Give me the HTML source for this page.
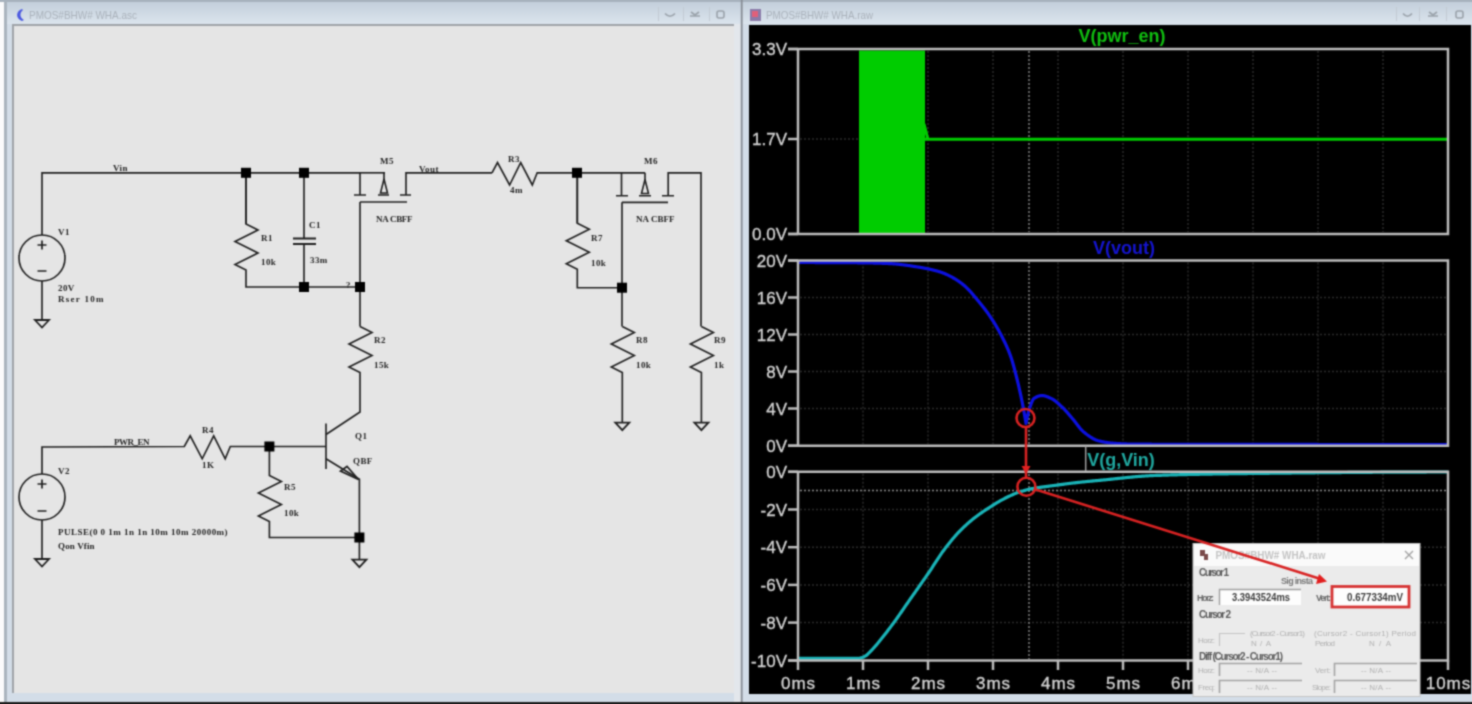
<!DOCTYPE html>
<html><head><meta charset="utf-8"><style>html,body{margin:0;padding:0;background:#f6f7f8;overflow:hidden}svg{display:block}#w{}</style></head>
<body><div id="w"><svg width="1472" height="704" viewBox="0 0 1472 704"><defs><filter id="bl" x="0" y="0" width="1472" height="704" filterUnits="userSpaceOnUse" color-interpolation-filters="sRGB"><feConvolveMatrix order="5" kernelMatrix="0.00009 0.00198 0.00548 0.00198 0.00009 0.00198 0.04220 0.11707 0.04220 0.00198 0.00548 0.11707 0.32480 0.11707 0.00548 0.00198 0.04220 0.11707 0.04220 0.00198 0.00009 0.00198 0.00548 0.00198 0.00009" edgeMode="duplicate"/></filter></defs><g filter="url(#bl)">
<rect x="0" y="0" width="1472" height="704" fill="#fbfbfc"/>
<!-- left window frame -->
<rect x="4" y="0" width="737" height="704" fill="#d3dde8"/><rect x="734" y="0" width="7" height="704" fill="#e3e7ec"/>
<rect x="4" y="0" width="3" height="704" fill="#aab4be"/>
<!-- right window frame -->
<rect x="742" y="0" width="730" height="704" fill="#d3dde8"/>
<linearGradient id="tb" x1="0" y1="0" x2="0" y2="1"><stop offset="0" stop-color="#c3cfdb"/><stop offset="1" stop-color="#dbe4ed"/></linearGradient>
<rect x="7" y="2" width="734" height="22" fill="url(#tb)"/>
<rect x="742" y="2" width="730" height="22" fill="url(#tb)"/>
<rect x="0" y="0" width="1472" height="2" fill="#a7b2bd"/>
<rect x="740.8" y="0" width="1.8" height="704" fill="#868c94"/>
<rect x="0" y="702" width="1472" height="2" fill="#1e1e1e"/>
<!-- left content -->
<rect x="12" y="24" width="722" height="669" fill="#9fa3a8"/>
<rect x="14" y="26" width="720" height="667" fill="#e5e5e5"/>
<!-- right content -->
<rect x="749" y="25" width="722" height="669" fill="#000"/>
<path d="M22,9 C16,11 15,18 22,21 L24,20 C20,18 19,13 23,10 Z" fill="#4a58e0"/><text x="29" y="19" font-family="Liberation Sans" font-size="10.5" fill="#aab2bb" textLength="108" lengthAdjust="spacingAndGlyphs">PMOS#BHW# WHA.asc</text><rect x="750" y="9" width="11" height="12" fill="#8a7aa8"/><rect x="752" y="11" width="6" height="6" fill="#e0607a"/><text x="766" y="19" font-family="Liberation Sans" font-size="10.5" fill="#aab2bb" textLength="107" lengthAdjust="spacingAndGlyphs">PMOS#BHW# WHA.raw</text><g stroke="#c2cad3" stroke-width="1"><path d="M658.5,7 V21"/><path d="M683.5,7 V21"/><path d="M709.5,7 V21"/><path d="M1396.5,7 V21"/><path d="M1419.5,7 V21"/><path d="M1446.5,7 V21"/></g><g stroke="#9aa2aa" stroke-width="1.6" fill="none"><path d="M665,13.5 Q670,19 675,13.5"/><path d="M691,12 l4,3 l4,-3 M690,16 h10"/><rect x="717" y="11" width="7" height="7" rx="2"/><path d="M1403,13.5 Q1407.5,19 1412,13.5"/><path d="M1429,12 l4,3 l4,-3 M1428,16 h10"/><rect x="1456" y="11" width="7" height="7" rx="2"/></g><g stroke="#202020" stroke-width="1.65" fill="none" stroke-linejoin="miter"><polyline points="42.0,281.0 42.0,320.0"/><polyline points="42.0,235.0 42.0,172.8 360.0,172.8"/><circle cx="42" cy="258" r="23" fill="none"/><path d="M37.5,245 h9 M42,240.5 v9 M37.5,271 h9" stroke-width="1.7"/><polygon points="35.0,320.0 49.0,320.0 42.0,327.5" fill="none" stroke-width="1.8"/><polyline points="246.0,172.8 246.0,224.0 258.0,230.0 235.0,241.5 258.0,253.0 235.0,264.5 246.0,270.0 246.0,287.0 360.0,287.0"/><polyline points="246.0,172.8 246.0,224.0"/><polyline points="304.0,172.8 304.0,238.0"/><polyline points="304.0,244.0 304.0,287.0"/><path d="M293,238.5 h23 M293,244 h23" stroke-width="2"/><polyline points="360.0,172.8 385.0,172.8"/><polyline points="360.0,172.8 360.0,195.0"/><path d="M354,195 h12 M378,195 h11 M400,195 h11"/><polyline points="384.0,172.8 384.0,180.0"/><polygon points="380.5,193 384,179 387.5,193" fill="none" stroke-width="1.6"/><polyline points="406.0,195.0 406.0,172.8 492.0,172.8"/><polyline points="360.0,202.0 407.0,202.0"/><polyline points="360.0,202.0 360.0,326.6"/><polyline points="360.0,326.6 372.0,332.6 349.0,344.1 372.0,355.6 349.0,367.1 360.0,372.6 360.0,412.0 326.0,434.5"/><polyline points="326.0,423.5 326.0,469.0"/><polyline points="326.0,458.8 359.4,479.2 359.4,537.5"/><polygon points="358.5,479.5 340.5,471 347,466.5" fill="none" stroke-width="1.7"/><polyline points="492.0,172.8 497.5,162.6 509.6,185.0 520.7,162.6 532.3,185.0 537.2,172.8 645.0,172.8"/><polyline points="577.3,172.8 577.3,223.2 589.3,229.2 566.3,240.7 589.3,252.2 566.3,263.7 577.3,269.2 577.3,287.7 622.4,287.7"/><polyline points="577.3,172.8 577.3,223.2"/><polyline points="621.5,172.8 621.5,195.7"/><path d="M616,195.7 h12 M639,195.7 h12 M662,195.7 h12"/><polyline points="645.0,172.8 645.0,180.0"/><polygon points="641.5,193.5 645,179.5 648.5,193.5" fill="none" stroke-width="1.6"/><polyline points="668.2,195.7 668.2,172.8 701.0,172.8 701.0,326.6"/><polyline points="622.0,202.3 668.0,202.3"/><polyline points="622.0,202.3 622.0,326.6"/><polyline points="622.3,326.6 634.3,332.6 611.3,344.1 634.3,355.6 611.3,367.1 622.3,372.6 622.3,422.7"/><polygon points="615.3,422.7 629.3,422.7 622.3,430.2" fill="none" stroke-width="1.8"/><polyline points="701.4,326.6 713.4,332.6 690.4,344.1 713.4,355.6 690.4,367.1 701.4,372.6 701.4,422.7"/><polygon points="694.4,422.7 708.4,422.7 701.4,430.2" fill="none" stroke-width="1.8"/><polyline points="42.0,474.0 42.0,447.0 184.3,446.5 190.2,435.8 202.2,458.8 213.7,435.8 225.2,458.8 230.3,446.5 326.0,446.5"/><circle cx="42" cy="497" r="23" fill="none"/><path d="M37.5,484 h9 M42,479.5 v9 M37.5,511 h9" stroke-width="1.7"/><polyline points="42.0,520.0 42.0,559.0"/><polygon points="35.0,559.0 49.0,559.0 42.0,566.5" fill="none" stroke-width="1.8"/><polyline points="269.4,446.5 269.4,475.4 281.4,481.4 258.4,492.9 281.4,504.4 258.4,515.9 269.4,521.4 269.4,537.5 359.4,537.5"/><polyline points="359.4,537.5 359.4,559.7"/><polygon points="352.4,559.7 366.4,559.7 359.4,567.2" fill="none" stroke-width="1.8"/></g><rect x="241" y="167.8" width="10" height="10" fill="#000"/><rect x="299" y="167.8" width="10" height="10" fill="#000"/><rect x="299" y="282" width="10" height="10" fill="#000"/><rect x="355" y="282" width="10" height="10" fill="#000"/><rect x="572" y="167.8" width="10" height="10" fill="#000"/><rect x="617" y="282.7" width="10" height="10" fill="#000"/><rect x="264.4" y="441.5" width="10" height="10" fill="#000"/><rect x="354.4" y="532.5" width="10" height="10" fill="#000"/><g font-family="Liberation Serif" font-size="9" font-weight="bold" fill="#262626" letter-spacing="0.4"><text x="58" y="235">V1</text><text x="58" y="291">20V</text><text x="58" y="302" textLength="46" lengthAdjust="spacing">Rser 10m</text><text x="113" y="171">Vin</text><text x="261" y="240.5">R1</text><text x="261" y="265">10k</text><text x="309" y="228">C1</text><text x="310" y="263">33m</text><text x="380" y="164">M5</text><text x="419" y="172">Vout</text><text x="376" y="222" textLength="37" lengthAdjust="spacing">NA CBFF</text><text x="346" y="288">?</text><text x="508" y="162">R3</text><text x="510" y="193">4m</text><text x="644" y="164">M6</text><text x="636" y="222" textLength="39" lengthAdjust="spacing">NA CBFF</text><text x="591" y="240.5">R7</text><text x="591" y="266">10k</text><text x="374" y="342.5">R2</text><text x="374" y="368">15k</text><text x="636" y="342.5">R8</text><text x="636" y="368">10k</text><text x="714" y="342.5">R9</text><text x="714" y="368">1k</text><text x="114" y="445" textLength="36" lengthAdjust="spacing">PWR_EN</text><text x="202" y="433">R4</text><text x="202" y="467.5">1K</text><text x="284" y="489.5">R5</text><text x="284" y="516">10k</text><text x="355" y="439">Q1</text><text x="353" y="464">QBF</text><text x="58" y="473.5">V2</text><text x="58" y="535" textLength="170" lengthAdjust="spacing">PULSE(0 0 1m 1n 1n 10m 10m 20000m)</text><text x="58" y="549" textLength="37" lengthAdjust="spacing">Qon Vfin</text></g><g stroke="#2a2a2a" stroke-width="1.5" stroke-dasharray="2,2" fill="none"><path d="M800,139 H1446"/><path d="M863,51 V232"/><path d="M928,51 V232"/><path d="M993,51 V232"/><path d="M1058,51 V232"/><path d="M1123,51 V232"/><path d="M1188,51 V232"/><path d="M1253,51 V232"/><path d="M1318,51 V232"/><path d="M1383,51 V232"/><path d="M800,297.5 H1446"/><path d="M800,334.5 H1446"/><path d="M800,371.5 H1446"/><path d="M800,408.5 H1446"/><path d="M863,262.5 V443.7"/><path d="M928,262.5 V443.7"/><path d="M993,262.5 V443.7"/><path d="M1058,262.5 V443.7"/><path d="M1123,262.5 V443.7"/><path d="M1188,262.5 V443.7"/><path d="M1253,262.5 V443.7"/><path d="M1318,262.5 V443.7"/><path d="M1383,262.5 V443.7"/><path d="M800,509.5 H1446"/><path d="M800,547.2 H1446"/><path d="M800,584.9 H1446"/><path d="M800,622.6 H1446"/><path d="M863,473.8 V658.5"/><path d="M928,473.8 V658.5"/><path d="M993,473.8 V658.5"/><path d="M1058,473.8 V658.5"/><path d="M1123,473.8 V658.5"/><path d="M1188,473.8 V658.5"/><path d="M1253,473.8 V658.5"/><path d="M1318,473.8 V658.5"/><path d="M1383,473.8 V658.5"/></g><g stroke="#8a8a8a" stroke-width="1.4" stroke-dasharray="2,2" fill="none"><path d="M1029,51 V232 M1029,262 V444 M1029,474 V659"/><path d="M800,490.5 H1446"/></g><rect x="859" y="50.5" width="66" height="182.5" fill="#00cc00"/><path d="M924,124 L927.5,137.5 L926,139.2 L1448,139.2" stroke="#00cc00" stroke-width="3" fill="none"/><path d="M798.0,262.50 L798.5,262.50 L799.0,262.50 L799.5,262.50 L800.0,262.50 L800.5,262.50 L801.0,262.50 L801.5,262.50 L802.0,262.50 L802.5,262.50 L803.0,262.50 L803.5,262.50 L804.0,262.50 L804.5,262.50 L805.0,262.50 L805.5,262.50 L806.0,262.51 L806.5,262.51 L807.0,262.51 L807.5,262.51 L808.0,262.51 L808.5,262.51 L809.0,262.51 L809.5,262.51 L810.0,262.51 L810.5,262.51 L811.0,262.51 L811.5,262.52 L812.0,262.52 L812.5,262.52 L813.0,262.52 L813.5,262.52 L814.0,262.52 L814.5,262.52 L815.0,262.53 L815.5,262.53 L816.0,262.53 L816.5,262.53 L817.0,262.53 L817.5,262.53 L818.0,262.53 L818.5,262.54 L819.0,262.54 L819.5,262.54 L820.0,262.54 L820.5,262.54 L821.0,262.55 L821.5,262.55 L822.0,262.55 L822.5,262.55 L823.0,262.55 L823.5,262.56 L824.0,262.56 L824.5,262.56 L825.0,262.56 L825.5,262.56 L826.0,262.57 L826.5,262.57 L827.0,262.57 L827.5,262.57 L828.0,262.58 L828.5,262.58 L829.0,262.58 L829.5,262.58 L830.0,262.59 L830.5,262.59 L831.0,262.59 L831.5,262.59 L832.0,262.60 L832.5,262.60 L833.0,262.60 L833.5,262.60 L834.0,262.61 L834.5,262.61 L835.0,262.61 L835.5,262.62 L836.0,262.62 L836.5,262.62 L837.0,262.63 L837.5,262.63 L838.0,262.63 L838.5,262.63 L839.0,262.64 L839.5,262.64 L840.0,262.64 L840.5,262.65 L841.0,262.65 L841.5,262.65 L842.0,262.66 L842.5,262.66 L843.0,262.66 L843.5,262.67 L844.0,262.67 L844.5,262.68 L845.0,262.68 L845.5,262.68 L846.0,262.69 L846.5,262.69 L847.0,262.69 L847.5,262.70 L848.0,262.70 L848.5,262.70 L849.0,262.71 L849.5,262.71 L850.0,262.72 L850.5,262.72 L851.0,262.72 L851.5,262.73 L852.0,262.73 L852.5,262.74 L853.0,262.74 L853.5,262.74 L854.0,262.75 L854.5,262.75 L855.0,262.76 L855.5,262.76 L856.0,262.77 L856.5,262.77 L857.0,262.77 L857.5,262.78 L858.0,262.78 L858.5,262.79 L859.0,262.79 L859.5,262.80 L860.0,262.80 L860.5,262.80 L861.0,262.81 L861.5,262.81 L862.0,262.82 L862.5,262.83 L863.0,262.83 L863.5,262.84 L864.0,262.85 L864.5,262.85 L865.0,262.86 L865.5,262.87 L866.0,262.88 L866.5,262.88 L867.0,262.89 L867.5,262.90 L868.0,262.91 L868.5,262.92 L869.0,262.93 L869.5,262.94 L870.0,262.95 L870.5,262.96 L871.0,262.97 L871.5,262.98 L872.0,263.00 L872.5,263.01 L873.0,263.02 L873.5,263.03 L874.0,263.04 L874.5,263.06 L875.0,263.07 L875.5,263.09 L876.0,263.10 L876.5,263.11 L877.0,263.13 L877.5,263.14 L878.0,263.16 L878.5,263.17 L879.0,263.19 L879.5,263.21 L880.0,263.22 L880.5,263.24 L881.0,263.26 L881.5,263.27 L882.0,263.29 L882.5,263.31 L883.0,263.33 L883.5,263.34 L884.0,263.36 L884.5,263.38 L885.0,263.40 L885.5,263.42 L886.0,263.44 L886.5,263.46 L887.0,263.48 L887.5,263.50 L888.0,263.52 L888.5,263.54 L889.0,263.57 L889.5,263.59 L890.0,263.61 L890.5,263.63 L891.0,263.66 L891.5,263.69 L892.0,263.72 L892.5,263.75 L893.0,263.78 L893.5,263.82 L894.0,263.85 L894.5,263.89 L895.0,263.93 L895.5,263.98 L896.0,264.02 L896.5,264.06 L897.0,264.11 L897.5,264.16 L898.0,264.21 L898.5,264.26 L899.0,264.31 L899.5,264.37 L900.0,264.42 L900.5,264.48 L901.0,264.54 L901.5,264.60 L902.0,264.66 L902.5,264.72 L903.0,264.78 L903.5,264.85 L904.0,264.91 L904.5,264.98 L905.0,265.05 L905.5,265.12 L906.0,265.18 L906.5,265.26 L907.0,265.33 L907.5,265.40 L908.0,265.47 L908.5,265.54 L909.0,265.62 L909.5,265.69 L910.0,265.77 L910.5,265.84 L911.0,265.92 L911.5,266.00 L912.0,266.08 L912.5,266.15 L913.0,266.23 L913.5,266.31 L914.0,266.39 L914.5,266.47 L915.0,266.55 L915.5,266.63 L916.0,266.71 L916.5,266.80 L917.0,266.88 L917.5,266.96 L918.0,267.04 L918.5,267.12 L919.0,267.20 L919.5,267.28 L920.0,267.37 L920.5,267.45 L921.0,267.53 L921.5,267.62 L922.0,267.70 L922.5,267.79 L923.0,267.88 L923.5,267.97 L924.0,268.06 L924.5,268.16 L925.0,268.25 L925.5,268.35 L926.0,268.44 L926.5,268.54 L927.0,268.64 L927.5,268.74 L928.0,268.85 L928.5,268.95 L929.0,269.06 L929.5,269.17 L930.0,269.28 L930.5,269.39 L931.0,269.50 L931.5,269.62 L932.0,269.74 L932.5,269.86 L933.0,269.98 L933.5,270.10 L934.0,270.23 L934.5,270.35 L935.0,270.48 L935.5,270.61 L936.0,270.75 L936.5,270.88 L937.0,271.02 L937.5,271.16 L938.0,271.31 L938.5,271.45 L939.0,271.60 L939.5,271.75 L940.0,271.90 L940.5,272.06 L941.0,272.22 L941.5,272.39 L942.0,272.57 L942.5,272.75 L943.0,272.94 L943.5,273.14 L944.0,273.34 L944.5,273.54 L945.0,273.76 L945.5,273.97 L946.0,274.20 L946.5,274.42 L947.0,274.65 L947.5,274.89 L948.0,275.13 L948.5,275.38 L949.0,275.62 L949.5,275.88 L950.0,276.13 L950.5,276.39 L951.0,276.65 L951.5,276.92 L952.0,277.18 L952.5,277.45 L953.0,277.73 L953.5,278.01 L954.0,278.30 L954.5,278.59 L955.0,278.89 L955.5,279.20 L956.0,279.51 L956.5,279.82 L957.0,280.15 L957.5,280.48 L958.0,280.82 L958.5,281.16 L959.0,281.51 L959.5,281.86 L960.0,282.22 L960.5,282.59 L961.0,282.96 L961.5,283.34 L962.0,283.73 L962.5,284.12 L963.0,284.52 L963.5,284.93 L964.0,285.34 L964.5,285.76 L965.0,286.19 L965.5,286.62 L966.0,287.08 L966.5,287.55 L967.0,288.03 L967.5,288.53 L968.0,289.04 L968.5,289.56 L969.0,290.09 L969.5,290.63 L970.0,291.18 L970.5,291.74 L971.0,292.31 L971.5,292.89 L972.0,293.47 L972.5,294.05 L973.0,294.64 L973.5,295.24 L974.0,295.84 L974.5,296.44 L975.0,297.04 L975.5,297.64 L976.0,298.24 L976.5,298.84 L977.0,299.44 L977.5,300.04 L978.0,300.64 L978.5,301.24 L979.0,301.84 L979.5,302.44 L980.0,303.05 L980.5,303.66 L981.0,304.27 L981.5,304.89 L982.0,305.51 L982.5,306.13 L983.0,306.76 L983.5,307.40 L984.0,308.04 L984.5,308.69 L985.0,309.34 L985.5,310.00 L986.0,310.67 L986.5,311.34 L987.0,312.02 L987.5,312.71 L988.0,313.41 L988.5,314.12 L989.0,314.84 L989.5,315.56 L990.0,316.29 L990.5,317.04 L991.0,317.79 L991.5,318.55 L992.0,319.32 L992.5,320.09 L993.0,320.88 L993.5,321.67 L994.0,322.47 L994.5,323.29 L995.0,324.11 L995.5,324.94 L996.0,325.78 L996.5,326.63 L997.0,327.49 L997.5,328.36 L998.0,329.25 L998.5,330.14 L999.0,331.04 L999.5,331.96 L1000.0,332.89 L1000.5,333.82 L1001.0,334.77 L1001.5,335.73 L1002.0,336.71 L1002.5,337.69 L1003.0,338.68 L1003.5,339.68 L1004.0,340.69 L1004.5,341.72 L1005.0,342.76 L1005.5,343.82 L1006.0,344.89 L1006.5,345.99 L1007.0,347.12 L1007.5,348.27 L1008.0,349.45 L1008.5,350.67 L1009.0,351.91 L1009.5,353.20 L1010.0,354.52 L1010.5,355.88 L1011.0,357.29 L1011.5,358.77 L1012.0,360.33 L1012.5,361.97 L1013.0,363.69 L1013.5,365.46 L1014.0,367.29 L1014.5,369.16 L1015.0,371.08 L1015.5,373.03 L1016.0,375.00 L1016.5,376.99 L1017.0,379.00 L1017.5,381.02 L1018.0,383.09 L1018.5,385.20 L1019.0,387.35 L1019.5,389.55 L1020.0,391.80 L1020.5,394.10 L1021.0,396.45 L1021.5,398.85 L1022.0,401.30 L1022.5,403.82 L1023.0,406.41 L1023.5,409.08 L1024.0,411.82 L1024.5,414.63 L1025.0,417.50 L1025.5,420.42 L1026.0,423.40 L1026.0,423.40 L1026.5,420.89 L1027.0,418.48 L1027.5,416.18 L1028.0,414.02 L1028.5,412.02 L1029.0,410.21 L1029.5,408.60 L1030.0,407.10 L1030.5,405.62 L1031.0,404.18 L1031.5,402.82 L1032.0,401.58 L1032.5,400.48 L1033.0,399.56 L1033.5,398.86 L1034.0,398.40 L1034.5,398.08 L1035.0,397.78 L1035.5,397.50 L1036.0,397.23 L1036.5,396.98 L1037.0,396.75 L1037.5,396.54 L1038.0,396.35 L1038.5,396.18 L1039.0,396.03 L1039.5,395.90 L1040.0,395.79 L1040.5,395.71 L1041.0,395.65 L1041.5,395.61 L1042.0,395.60 L1042.5,395.61 L1043.0,395.65 L1043.5,395.71 L1044.0,395.80 L1044.5,395.90 L1045.0,396.02 L1045.5,396.16 L1046.0,396.32 L1046.5,396.49 L1047.0,396.67 L1047.5,396.86 L1048.0,397.06 L1048.5,397.27 L1049.0,397.48 L1049.5,397.70 L1050.0,397.92 L1050.5,398.14 L1051.0,398.36 L1051.5,398.58 L1052.0,398.83 L1052.5,399.11 L1053.0,399.40 L1053.5,399.72 L1054.0,400.06 L1054.5,400.41 L1055.0,400.78 L1055.5,401.17 L1056.0,401.57 L1056.5,401.99 L1057.0,402.41 L1057.5,402.85 L1058.0,403.30 L1058.5,403.75 L1059.0,404.21 L1059.5,404.67 L1060.0,405.14 L1060.5,405.61 L1061.0,406.09 L1061.5,406.56 L1062.0,407.03 L1062.5,407.50 L1063.0,407.98 L1063.5,408.47 L1064.0,408.97 L1064.5,409.49 L1065.0,410.02 L1065.5,410.56 L1066.0,411.11 L1066.5,411.67 L1067.0,412.23 L1067.5,412.81 L1068.0,413.38 L1068.5,413.97 L1069.0,414.55 L1069.5,415.14 L1070.0,415.73 L1070.5,416.32 L1071.0,416.91 L1071.5,417.50 L1072.0,418.09 L1072.5,418.67 L1073.0,419.25 L1073.5,419.85 L1074.0,420.46 L1074.5,421.09 L1075.0,421.73 L1075.5,422.38 L1076.0,423.04 L1076.5,423.70 L1077.0,424.36 L1077.5,425.02 L1078.0,425.67 L1078.5,426.32 L1079.0,426.96 L1079.5,427.58 L1080.0,428.19 L1080.5,428.79 L1081.0,429.36 L1081.5,429.91 L1082.0,430.43 L1082.5,430.92 L1083.0,431.39 L1083.5,431.82 L1084.0,432.22 L1084.5,432.62 L1085.0,433.02 L1085.5,433.41 L1086.0,433.80 L1086.5,434.19 L1087.0,434.56 L1087.5,434.94 L1088.0,435.30 L1088.5,435.66 L1089.0,436.01 L1089.5,436.36 L1090.0,436.70 L1090.5,437.03 L1091.0,437.35 L1091.5,437.66 L1092.0,437.96 L1092.5,438.25 L1093.0,438.53 L1093.5,438.80 L1094.0,439.06 L1094.5,439.30 L1095.0,439.54 L1095.5,439.76 L1096.0,439.97 L1096.5,440.16 L1097.0,440.34 L1097.5,440.51 L1098.0,440.66 L1098.5,440.80 L1099.0,440.93 L1099.5,441.05 L1100.0,441.17 L1100.5,441.29 L1101.0,441.40 L1101.5,441.51 L1102.0,441.62 L1102.5,441.73 L1103.0,441.83 L1103.5,441.92 L1104.0,442.02 L1104.5,442.11 L1105.0,442.20 L1105.5,442.28 L1106.0,442.36 L1106.5,442.44 L1107.0,442.52 L1107.5,442.59 L1108.0,442.66 L1108.5,442.73 L1109.0,442.79 L1109.5,442.85 L1110.0,442.91 L1110.5,442.97 L1111.0,443.02 L1111.5,443.07 L1112.0,443.11 L1112.5,443.16 L1113.0,443.20 L1113.5,443.24 L1114.0,443.28 L1114.5,443.32 L1115.0,443.36 L1115.5,443.39 L1116.0,443.43 L1116.5,443.47 L1117.0,443.50 L1117.5,443.53 L1118.0,443.57 L1118.5,443.60 L1119.0,443.63 L1119.5,443.66 L1120.0,443.69 L1120.5,443.72 L1121.0,443.75 L1121.5,443.77 L1122.0,443.80 L1122.5,443.82 L1123.0,443.85 L1123.5,443.87 L1124.0,443.89 L1124.5,443.91 L1125.0,443.92 L1125.5,443.94 L1126.0,443.95 L1126.5,443.97 L1127.0,443.98 L1127.5,443.99 L1128.0,444.00 L1128.5,444.00 L1129.0,444.01 L1129.5,444.01 L1130.0,444.02 L1130.5,444.03 L1131.0,444.03 L1131.5,444.04 L1132.0,444.04 L1132.5,444.05 L1133.0,444.05 L1133.5,444.06 L1134.0,444.07 L1134.5,444.07 L1135.0,444.08 L1135.5,444.08 L1136.0,444.09 L1136.5,444.09 L1137.0,444.10 L1137.5,444.10 L1138.0,444.11 L1138.5,444.11 L1139.0,444.12 L1139.5,444.12 L1140.0,444.13 L1140.5,444.13 L1141.0,444.14 L1141.5,444.14 L1142.0,444.15 L1142.5,444.15 L1143.0,444.15 L1143.5,444.16 L1144.0,444.16 L1144.5,444.17 L1145.0,444.17 L1145.5,444.18 L1146.0,444.18 L1146.5,444.18 L1147.0,444.19 L1147.5,444.19 L1148.0,444.20 L1148.5,444.20 L1149.0,444.20 L1149.5,444.21 L1150.0,444.21 L1150.5,444.22 L1151.0,444.22 L1151.5,444.22 L1152.0,444.23 L1152.5,444.23 L1153.0,444.23 L1153.5,444.24 L1154.0,444.24 L1154.5,444.24 L1155.0,444.25 L1155.5,444.25 L1156.0,444.25 L1156.5,444.26 L1157.0,444.26 L1157.5,444.26 L1158.0,444.27 L1158.5,444.27 L1159.0,444.27 L1159.5,444.28 L1160.0,444.28 L1160.5,444.28 L1161.0,444.28 L1161.5,444.29 L1162.0,444.29 L1162.5,444.29 L1163.0,444.30 L1163.5,444.30 L1164.0,444.30 L1164.5,444.30 L1165.0,444.31 L1165.5,444.31 L1166.0,444.31 L1166.5,444.31 L1167.0,444.32 L1167.5,444.32 L1168.0,444.32 L1168.5,444.32 L1169.0,444.32 L1169.5,444.33 L1170.0,444.33 L1170.5,444.33 L1171.0,444.33 L1171.5,444.33 L1172.0,444.34 L1172.5,444.34 L1173.0,444.34 L1173.5,444.34 L1174.0,444.34 L1174.5,444.35 L1175.0,444.35 L1175.5,444.35 L1176.0,444.35 L1176.5,444.35 L1177.0,444.35 L1177.5,444.36 L1178.0,444.36 L1178.5,444.36 L1179.0,444.36 L1179.5,444.36 L1180.0,444.36 L1180.5,444.37 L1181.0,444.37 L1181.5,444.37 L1182.0,444.37 L1182.5,444.37 L1183.0,444.37 L1183.5,444.37 L1184.0,444.37 L1184.5,444.38 L1185.0,444.38 L1185.5,444.38 L1186.0,444.38 L1186.5,444.38 L1187.0,444.38 L1187.5,444.38 L1188.0,444.38 L1188.5,444.38 L1189.0,444.39 L1189.5,444.39 L1190.0,444.39 L1190.5,444.39 L1191.0,444.39 L1191.5,444.39 L1192.0,444.39 L1192.5,444.39 L1193.0,444.39 L1193.5,444.39 L1194.0,444.39 L1194.5,444.39 L1195.0,444.39 L1195.5,444.40 L1196.0,444.40 L1196.5,444.40 L1197.0,444.40 L1197.5,444.40 L1198.0,444.40 L1198.5,444.40 L1199.0,444.40 L1199.5,444.40 L1200.0,444.40 L1200.5,444.40 L1201.0,444.40 L1201.5,444.40 L1202.0,444.40 L1202.5,444.40 L1203.0,444.40 L1203.5,444.40 L1204.0,444.40 L1204.5,444.40 L1205.0,444.40 L1205.5,444.40 L1206.0,444.41 L1206.5,444.41 L1207.0,444.41 L1207.5,444.41 L1208.0,444.41 L1208.5,444.41 L1209.0,444.41 L1209.5,444.41 L1210.0,444.41 L1210.5,444.41 L1211.0,444.41 L1211.5,444.41 L1212.0,444.41 L1212.5,444.41 L1213.0,444.41 L1213.5,444.41 L1214.0,444.41 L1214.5,444.41 L1215.0,444.41 L1215.5,444.41 L1216.0,444.41 L1216.5,444.41 L1217.0,444.41 L1217.5,444.41 L1218.0,444.42 L1218.5,444.42 L1219.0,444.42 L1219.5,444.42 L1220.0,444.42 L1220.5,444.42 L1221.0,444.42 L1221.5,444.42 L1222.0,444.42 L1222.5,444.42 L1223.0,444.42 L1223.5,444.42 L1224.0,444.42 L1224.5,444.42 L1225.0,444.42 L1225.5,444.42 L1226.0,444.42 L1226.5,444.42 L1227.0,444.42 L1227.5,444.42 L1228.0,444.42 L1228.5,444.42 L1229.0,444.42 L1229.5,444.42 L1230.0,444.42 L1230.5,444.43 L1231.0,444.43 L1231.5,444.43 L1232.0,444.43 L1232.5,444.43 L1233.0,444.43 L1233.5,444.43 L1234.0,444.43 L1234.5,444.43 L1235.0,444.43 L1235.5,444.43 L1236.0,444.43 L1236.5,444.43 L1237.0,444.43 L1237.5,444.43 L1238.0,444.43 L1238.5,444.43 L1239.0,444.43 L1239.5,444.43 L1240.0,444.43 L1240.5,444.43 L1241.0,444.43 L1241.5,444.43 L1242.0,444.43 L1242.5,444.43 L1243.0,444.43 L1243.5,444.43 L1244.0,444.43 L1244.5,444.44 L1245.0,444.44 L1245.5,444.44 L1246.0,444.44 L1246.5,444.44 L1247.0,444.44 L1247.5,444.44 L1248.0,444.44 L1248.5,444.44 L1249.0,444.44 L1249.5,444.44 L1250.0,444.44 L1250.5,444.44 L1251.0,444.44 L1251.5,444.44 L1252.0,444.44 L1252.5,444.44 L1253.0,444.44 L1253.5,444.44 L1254.0,444.44 L1254.5,444.44 L1255.0,444.44 L1255.5,444.44 L1256.0,444.44 L1256.5,444.44 L1257.0,444.44 L1257.5,444.44 L1258.0,444.44 L1258.5,444.44 L1259.0,444.44 L1259.5,444.45 L1260.0,444.45 L1260.5,444.45 L1261.0,444.45 L1261.5,444.45 L1262.0,444.45 L1262.5,444.45 L1263.0,444.45 L1263.5,444.45 L1264.0,444.45 L1264.5,444.45 L1265.0,444.45 L1265.5,444.45 L1266.0,444.45 L1266.5,444.45 L1267.0,444.45 L1267.5,444.45 L1268.0,444.45 L1268.5,444.45 L1269.0,444.45 L1269.5,444.45 L1270.0,444.45 L1270.5,444.45 L1271.0,444.45 L1271.5,444.45 L1272.0,444.45 L1272.5,444.45 L1273.0,444.45 L1273.5,444.45 L1274.0,444.45 L1274.5,444.45 L1275.0,444.45 L1275.5,444.45 L1276.0,444.46 L1276.5,444.46 L1277.0,444.46 L1277.5,444.46 L1278.0,444.46 L1278.5,444.46 L1279.0,444.46 L1279.5,444.46 L1280.0,444.46 L1280.5,444.46 L1281.0,444.46 L1281.5,444.46 L1282.0,444.46 L1282.5,444.46 L1283.0,444.46 L1283.5,444.46 L1284.0,444.46 L1284.5,444.46 L1285.0,444.46 L1285.5,444.46 L1286.0,444.46 L1286.5,444.46 L1287.0,444.46 L1287.5,444.46 L1288.0,444.46 L1288.5,444.46 L1289.0,444.46 L1289.5,444.46 L1290.0,444.46 L1290.5,444.46 L1291.0,444.46 L1291.5,444.46 L1292.0,444.46 L1292.5,444.46 L1293.0,444.46 L1293.5,444.46 L1294.0,444.46 L1294.5,444.46 L1295.0,444.47 L1295.5,444.47 L1296.0,444.47 L1296.5,444.47 L1297.0,444.47 L1297.5,444.47 L1298.0,444.47 L1298.5,444.47 L1299.0,444.47 L1299.5,444.47 L1300.0,444.47 L1300.5,444.47 L1301.0,444.47 L1301.5,444.47 L1302.0,444.47 L1302.5,444.47 L1303.0,444.47 L1303.5,444.47 L1304.0,444.47 L1304.5,444.47 L1305.0,444.47 L1305.5,444.47 L1306.0,444.47 L1306.5,444.47 L1307.0,444.47 L1307.5,444.47 L1308.0,444.47 L1308.5,444.47 L1309.0,444.47 L1309.5,444.47 L1310.0,444.47 L1310.5,444.47 L1311.0,444.47 L1311.5,444.47 L1312.0,444.47 L1312.5,444.47 L1313.0,444.47 L1313.5,444.47 L1314.0,444.47 L1314.5,444.47 L1315.0,444.47 L1315.5,444.47 L1316.0,444.47 L1316.5,444.47 L1317.0,444.47 L1317.5,444.48 L1318.0,444.48 L1318.5,444.48 L1319.0,444.48 L1319.5,444.48 L1320.0,444.48 L1320.5,444.48 L1321.0,444.48 L1321.5,444.48 L1322.0,444.48 L1322.5,444.48 L1323.0,444.48 L1323.5,444.48 L1324.0,444.48 L1324.5,444.48 L1325.0,444.48 L1325.5,444.48 L1326.0,444.48 L1326.5,444.48 L1327.0,444.48 L1327.5,444.48 L1328.0,444.48 L1328.5,444.48 L1329.0,444.48 L1329.5,444.48 L1330.0,444.48 L1330.5,444.48 L1331.0,444.48 L1331.5,444.48 L1332.0,444.48 L1332.5,444.48 L1333.0,444.48 L1333.5,444.48 L1334.0,444.48 L1334.5,444.48 L1335.0,444.48 L1335.5,444.48 L1336.0,444.48 L1336.5,444.48 L1337.0,444.48 L1337.5,444.48 L1338.0,444.48 L1338.5,444.48 L1339.0,444.48 L1339.5,444.48 L1340.0,444.48 L1340.5,444.48 L1341.0,444.48 L1341.5,444.48 L1342.0,444.48 L1342.5,444.48 L1343.0,444.48 L1343.5,444.48 L1344.0,444.48 L1344.5,444.48 L1345.0,444.48 L1345.5,444.49 L1346.0,444.49 L1346.5,444.49 L1347.0,444.49 L1347.5,444.49 L1348.0,444.49 L1348.5,444.49 L1349.0,444.49 L1349.5,444.49 L1350.0,444.49 L1350.5,444.49 L1351.0,444.49 L1351.5,444.49 L1352.0,444.49 L1352.5,444.49 L1353.0,444.49 L1353.5,444.49 L1354.0,444.49 L1354.5,444.49 L1355.0,444.49 L1355.5,444.49 L1356.0,444.49 L1356.5,444.49 L1357.0,444.49 L1357.5,444.49 L1358.0,444.49 L1358.5,444.49 L1359.0,444.49 L1359.5,444.49 L1360.0,444.49 L1360.5,444.49 L1361.0,444.49 L1361.5,444.49 L1362.0,444.49 L1362.5,444.49 L1363.0,444.49 L1363.5,444.49 L1364.0,444.49 L1364.5,444.49 L1365.0,444.49 L1365.5,444.49 L1366.0,444.49 L1366.5,444.49 L1367.0,444.49 L1367.5,444.49 L1368.0,444.49 L1368.5,444.49 L1369.0,444.49 L1369.5,444.49 L1370.0,444.49 L1370.5,444.49 L1371.0,444.49 L1371.5,444.49 L1372.0,444.49 L1372.5,444.49 L1373.0,444.49 L1373.5,444.49 L1374.0,444.49 L1374.5,444.49 L1375.0,444.49 L1375.5,444.49 L1376.0,444.49 L1376.5,444.49 L1377.0,444.49 L1377.5,444.49 L1378.0,444.49 L1378.5,444.49 L1379.0,444.49 L1379.5,444.49 L1380.0,444.49 L1380.5,444.49 L1381.0,444.49 L1381.5,444.49 L1382.0,444.49 L1382.5,444.49 L1383.0,444.49 L1383.5,444.49 L1384.0,444.49 L1384.5,444.49 L1385.0,444.49 L1385.5,444.49 L1386.0,444.49 L1386.5,444.49 L1387.0,444.49 L1387.5,444.50 L1388.0,444.50 L1388.5,444.50 L1389.0,444.50 L1389.5,444.50 L1390.0,444.50 L1390.5,444.50 L1391.0,444.50 L1391.5,444.50 L1392.0,444.50 L1392.5,444.50 L1393.0,444.50 L1393.5,444.50 L1394.0,444.50 L1394.5,444.50 L1395.0,444.50 L1395.5,444.50 L1396.0,444.50 L1396.5,444.50 L1397.0,444.50 L1397.5,444.50 L1398.0,444.50 L1398.5,444.50 L1399.0,444.50 L1399.5,444.50 L1400.0,444.50 L1400.5,444.50 L1401.0,444.50 L1401.5,444.50 L1402.0,444.50 L1402.5,444.50 L1403.0,444.50 L1403.5,444.50 L1404.0,444.50 L1404.5,444.50 L1405.0,444.50 L1405.5,444.50 L1406.0,444.50 L1406.5,444.50 L1407.0,444.50 L1407.5,444.50 L1408.0,444.50 L1408.5,444.50 L1409.0,444.50 L1409.5,444.50 L1410.0,444.50 L1410.5,444.50 L1411.0,444.50 L1411.5,444.50 L1412.0,444.50 L1412.5,444.50 L1413.0,444.50 L1413.5,444.50 L1414.0,444.50 L1414.5,444.50 L1415.0,444.50 L1415.5,444.50 L1416.0,444.50 L1416.5,444.50 L1417.0,444.50 L1417.5,444.50 L1418.0,444.50 L1418.5,444.50 L1419.0,444.50 L1419.5,444.50 L1420.0,444.50 L1420.5,444.50 L1421.0,444.50 L1421.5,444.50 L1422.0,444.50 L1422.5,444.50 L1423.0,444.50 L1423.5,444.50 L1424.0,444.50 L1424.5,444.50 L1425.0,444.50 L1425.5,444.50 L1426.0,444.50 L1426.5,444.50 L1427.0,444.50 L1427.5,444.50 L1428.0,444.50 L1428.5,444.50 L1429.0,444.50 L1429.5,444.50 L1430.0,444.50 L1430.5,444.50 L1431.0,444.50 L1431.5,444.50 L1432.0,444.50 L1432.5,444.50 L1433.0,444.50 L1433.5,444.50 L1434.0,444.50 L1434.5,444.50 L1435.0,444.50 L1435.5,444.50 L1436.0,444.50 L1436.5,444.50 L1437.0,444.50 L1437.5,444.50 L1438.0,444.50 L1438.5,444.50 L1439.0,444.50 L1439.5,444.50 L1440.0,444.50 L1440.5,444.50 L1441.0,444.50 L1441.5,444.50 L1442.0,444.50 L1442.5,444.50 L1443.0,444.50 L1443.5,444.50 L1444.0,444.50 L1444.5,444.50 L1445.0,444.50 L1445.5,444.50 L1446.0,444.50 L1446.5,444.50 L1447.0,444.50 L1447.5,444.50 L1448.0,444.50" stroke="#0c10e0" stroke-width="3.2" fill="none" stroke-linejoin="round"/><path d="M798.0,658.40 L799.0,658.40 L800.0,658.40 L801.0,658.40 L802.0,658.40 L803.0,658.40 L804.0,658.40 L805.0,658.40 L806.0,658.40 L807.0,658.40 L808.0,658.40 L809.0,658.40 L810.0,658.40 L811.0,658.40 L812.0,658.40 L813.0,658.40 L814.0,658.40 L815.0,658.40 L816.0,658.40 L817.0,658.40 L818.0,658.40 L819.0,658.40 L820.0,658.40 L821.0,658.40 L822.0,658.40 L823.0,658.40 L824.0,658.40 L825.0,658.40 L826.0,658.40 L827.0,658.40 L828.0,658.40 L829.0,658.40 L830.0,658.40 L831.0,658.40 L832.0,658.40 L833.0,658.40 L834.0,658.40 L835.0,658.40 L836.0,658.40 L837.0,658.40 L838.0,658.40 L839.0,658.40 L840.0,658.40 L841.0,658.40 L842.0,658.40 L843.0,658.40 L844.0,658.40 L845.0,658.40 L846.0,658.40 L847.0,658.40 L848.0,658.40 L849.0,658.40 L850.0,658.40 L851.0,658.40 L852.0,658.40 L853.0,658.40 L854.0,658.40 L855.0,658.40 L856.0,658.40 L857.0,658.40 L858.0,658.36 L859.0,658.24 L860.0,658.06 L861.0,657.84 L862.0,657.60 L863.0,657.27 L864.0,656.80 L865.0,656.23 L866.0,655.60 L867.0,654.86 L868.0,653.97 L869.0,652.98 L870.0,651.93 L871.0,650.86 L872.0,649.81 L873.0,648.73 L874.0,647.62 L875.0,646.50 L876.0,645.35 L877.0,644.18 L878.0,642.99 L879.0,641.79 L880.0,640.56 L881.0,639.32 L882.0,638.07 L883.0,636.81 L884.0,635.53 L885.0,634.25 L886.0,632.95 L887.0,631.65 L888.0,630.34 L889.0,629.03 L890.0,627.71 L891.0,626.39 L892.0,625.07 L893.0,623.73 L894.0,622.37 L895.0,621.00 L896.0,619.61 L897.0,618.20 L898.0,616.79 L899.0,615.36 L900.0,613.92 L901.0,612.47 L902.0,611.02 L903.0,609.57 L904.0,608.11 L905.0,606.66 L906.0,605.20 L907.0,603.75 L908.0,602.30 L909.0,600.86 L910.0,599.43 L911.0,598.00 L912.0,596.58 L913.0,595.16 L914.0,593.74 L915.0,592.32 L916.0,590.90 L917.0,589.48 L918.0,588.06 L919.0,586.64 L920.0,585.22 L921.0,583.79 L922.0,582.37 L923.0,580.94 L924.0,579.50 L925.0,578.07 L926.0,576.62 L927.0,575.18 L928.0,573.73 L929.0,572.27 L930.0,570.79 L931.0,569.28 L932.0,567.77 L933.0,566.24 L934.0,564.70 L935.0,563.16 L936.0,561.62 L937.0,560.09 L938.0,558.57 L939.0,557.07 L940.0,555.58 L941.0,554.12 L942.0,552.69 L943.0,551.29 L944.0,549.93 L945.0,548.61 L946.0,547.30 L947.0,546.01 L948.0,544.73 L949.0,543.46 L950.0,542.22 L951.0,540.99 L952.0,539.78 L953.0,538.59 L954.0,537.42 L955.0,536.27 L956.0,535.14 L957.0,534.04 L958.0,532.96 L959.0,531.91 L960.0,530.88 L961.0,529.87 L962.0,528.88 L963.0,527.91 L964.0,526.95 L965.0,526.01 L966.0,525.08 L967.0,524.17 L968.0,523.28 L969.0,522.41 L970.0,521.55 L971.0,520.70 L972.0,519.87 L973.0,519.06 L974.0,518.26 L975.0,517.47 L976.0,516.71 L977.0,515.96 L978.0,515.22 L979.0,514.49 L980.0,513.78 L981.0,513.08 L982.0,512.39 L983.0,511.71 L984.0,511.04 L985.0,510.37 L986.0,509.71 L987.0,509.06 L988.0,508.41 L989.0,507.76 L990.0,507.12 L991.0,506.48 L992.0,505.84 L993.0,505.20 L994.0,504.57 L995.0,503.95 L996.0,503.33 L997.0,502.73 L998.0,502.13 L999.0,501.54 L1000.0,500.96 L1001.0,500.40 L1002.0,499.85 L1003.0,499.32 L1004.0,498.80 L1005.0,498.29 L1006.0,497.79 L1007.0,497.29 L1008.0,496.80 L1009.0,496.31 L1010.0,495.84 L1011.0,495.37 L1012.0,494.92 L1013.0,494.48 L1014.0,494.05 L1015.0,493.64 L1016.0,493.24 L1017.0,492.86 L1018.0,492.50 L1019.0,492.17 L1020.0,491.84 L1021.0,491.53 L1022.0,491.22 L1023.0,490.92 L1024.0,490.63 L1025.0,490.34 L1026.0,490.07 L1027.0,489.81 L1028.0,489.56 L1029.0,489.31 L1030.0,489.08 L1031.0,488.86 L1032.0,488.65 L1033.0,488.45 L1034.0,488.26 L1035.0,488.09 L1036.0,487.92 L1037.0,487.76 L1038.0,487.61 L1039.0,487.47 L1040.0,487.33 L1041.0,487.19 L1042.0,487.06 L1043.0,486.93 L1044.0,486.81 L1045.0,486.68 L1046.0,486.55 L1047.0,486.42 L1048.0,486.29 L1049.0,486.16 L1050.0,486.02 L1051.0,485.89 L1052.0,485.75 L1053.0,485.62 L1054.0,485.48 L1055.0,485.35 L1056.0,485.22 L1057.0,485.08 L1058.0,484.95 L1059.0,484.81 L1060.0,484.68 L1061.0,484.55 L1062.0,484.42 L1063.0,484.29 L1064.0,484.16 L1065.0,484.03 L1066.0,483.90 L1067.0,483.77 L1068.0,483.64 L1069.0,483.52 L1070.0,483.39 L1071.0,483.27 L1072.0,483.15 L1073.0,483.03 L1074.0,482.91 L1075.0,482.80 L1076.0,482.68 L1077.0,482.57 L1078.0,482.46 L1079.0,482.35 L1080.0,482.24 L1081.0,482.13 L1082.0,482.03 L1083.0,481.92 L1084.0,481.82 L1085.0,481.72 L1086.0,481.62 L1087.0,481.52 L1088.0,481.43 L1089.0,481.33 L1090.0,481.23 L1091.0,481.14 L1092.0,481.04 L1093.0,480.95 L1094.0,480.86 L1095.0,480.76 L1096.0,480.67 L1097.0,480.58 L1098.0,480.49 L1099.0,480.39 L1100.0,480.30 L1101.0,480.21 L1102.0,480.11 L1103.0,480.01 L1104.0,479.92 L1105.0,479.82 L1106.0,479.72 L1107.0,479.61 L1108.0,479.51 L1109.0,479.41 L1110.0,479.31 L1111.0,479.20 L1112.0,479.10 L1113.0,478.99 L1114.0,478.89 L1115.0,478.78 L1116.0,478.68 L1117.0,478.57 L1118.0,478.46 L1119.0,478.36 L1120.0,478.25 L1121.0,478.15 L1122.0,478.04 L1123.0,477.94 L1124.0,477.84 L1125.0,477.74 L1126.0,477.63 L1127.0,477.53 L1128.0,477.43 L1129.0,477.34 L1130.0,477.24 L1131.0,477.14 L1132.0,477.05 L1133.0,476.95 L1134.0,476.86 L1135.0,476.77 L1136.0,476.69 L1137.0,476.60 L1138.0,476.52 L1139.0,476.43 L1140.0,476.35 L1141.0,476.28 L1142.0,476.20 L1143.0,476.13 L1144.0,476.06 L1145.0,475.99 L1146.0,475.93 L1147.0,475.86 L1148.0,475.81 L1149.0,475.75 L1150.0,475.70 L1151.0,475.65 L1152.0,475.60 L1153.0,475.56 L1154.0,475.52 L1155.0,475.48 L1156.0,475.45 L1157.0,475.41 L1158.0,475.38 L1159.0,475.34 L1160.0,475.31 L1161.0,475.28 L1162.0,475.24 L1163.0,475.21 L1164.0,475.18 L1165.0,475.15 L1166.0,475.12 L1167.0,475.08 L1168.0,475.05 L1169.0,475.02 L1170.0,474.99 L1171.0,474.96 L1172.0,474.94 L1173.0,474.91 L1174.0,474.88 L1175.0,474.85 L1176.0,474.82 L1177.0,474.80 L1178.0,474.77 L1179.0,474.74 L1180.0,474.72 L1181.0,474.69 L1182.0,474.66 L1183.0,474.64 L1184.0,474.61 L1185.0,474.59 L1186.0,474.57 L1187.0,474.54 L1188.0,474.52 L1189.0,474.49 L1190.0,474.47 L1191.0,474.45 L1192.0,474.43 L1193.0,474.40 L1194.0,474.38 L1195.0,474.36 L1196.0,474.34 L1197.0,474.32 L1198.0,474.30 L1199.0,474.28 L1200.0,474.26 L1201.0,474.24 L1202.0,474.22 L1203.0,474.20 L1204.0,474.18 L1205.0,474.16 L1206.0,474.14 L1207.0,474.12 L1208.0,474.10 L1209.0,474.09 L1210.0,474.07 L1211.0,474.05 L1212.0,474.03 L1213.0,474.02 L1214.0,474.00 L1215.0,473.98 L1216.0,473.97 L1217.0,473.95 L1218.0,473.93 L1219.0,473.92 L1220.0,473.90 L1221.0,473.89 L1222.0,473.87 L1223.0,473.86 L1224.0,473.84 L1225.0,473.83 L1226.0,473.81 L1227.0,473.80 L1228.0,473.78 L1229.0,473.77 L1230.0,473.75 L1231.0,473.74 L1232.0,473.73 L1233.0,473.71 L1234.0,473.70 L1235.0,473.69 L1236.0,473.67 L1237.0,473.66 L1238.0,473.65 L1239.0,473.63 L1240.0,473.62 L1241.0,473.61 L1242.0,473.60 L1243.0,473.58 L1244.0,473.57 L1245.0,473.56 L1246.0,473.55 L1247.0,473.54 L1248.0,473.52 L1249.0,473.51 L1250.0,473.50 L1251.0,473.49 L1252.0,473.48 L1253.0,473.46 L1254.0,473.45 L1255.0,473.44 L1256.0,473.43 L1257.0,473.42 L1258.0,473.41 L1259.0,473.39 L1260.0,473.38 L1261.0,473.37 L1262.0,473.36 L1263.0,473.35 L1264.0,473.34 L1265.0,473.32 L1266.0,473.31 L1267.0,473.30 L1268.0,473.29 L1269.0,473.28 L1270.0,473.27 L1271.0,473.26 L1272.0,473.24 L1273.0,473.23 L1274.0,473.22 L1275.0,473.21 L1276.0,473.20 L1277.0,473.19 L1278.0,473.18 L1279.0,473.16 L1280.0,473.15 L1281.0,473.14 L1282.0,473.13 L1283.0,473.12 L1284.0,473.11 L1285.0,473.10 L1286.0,473.09 L1287.0,473.07 L1288.0,473.06 L1289.0,473.05 L1290.0,473.04 L1291.0,473.03 L1292.0,473.02 L1293.0,473.01 L1294.0,473.00 L1295.0,472.99 L1296.0,472.98 L1297.0,472.96 L1298.0,472.95 L1299.0,472.94 L1300.0,472.93 L1301.0,472.92 L1302.0,472.91 L1303.0,472.90 L1304.0,472.89 L1305.0,472.88 L1306.0,472.87 L1307.0,472.86 L1308.0,472.85 L1309.0,472.84 L1310.0,472.83 L1311.0,472.82 L1312.0,472.81 L1313.0,472.80 L1314.0,472.79 L1315.0,472.78 L1316.0,472.77 L1317.0,472.76 L1318.0,472.75 L1319.0,472.74 L1320.0,472.73 L1321.0,472.72 L1322.0,472.71 L1323.0,472.70 L1324.0,472.69 L1325.0,472.68 L1326.0,472.67 L1327.0,472.66 L1328.0,472.65 L1329.0,472.64 L1330.0,472.63 L1331.0,472.62 L1332.0,472.61 L1333.0,472.60 L1334.0,472.59 L1335.0,472.58 L1336.0,472.57 L1337.0,472.56 L1338.0,472.55 L1339.0,472.55 L1340.0,472.54 L1341.0,472.53 L1342.0,472.52 L1343.0,472.51 L1344.0,472.50 L1345.0,472.49 L1346.0,472.48 L1347.0,472.48 L1348.0,472.47 L1349.0,472.46 L1350.0,472.45 L1351.0,472.44 L1352.0,472.43 L1353.0,472.43 L1354.0,472.42 L1355.0,472.41 L1356.0,472.40 L1357.0,472.39 L1358.0,472.39 L1359.0,472.38 L1360.0,472.37 L1361.0,472.36 L1362.0,472.35 L1363.0,472.35 L1364.0,472.34 L1365.0,472.33 L1366.0,472.32 L1367.0,472.32 L1368.0,472.31 L1369.0,472.30 L1370.0,472.30 L1371.0,472.29 L1372.0,472.28 L1373.0,472.27 L1374.0,472.27 L1375.0,472.26 L1376.0,472.25 L1377.0,472.25 L1378.0,472.24 L1379.0,472.24 L1380.0,472.23 L1381.0,472.22 L1382.0,472.22 L1383.0,472.21 L1384.0,472.20 L1385.0,472.20 L1386.0,472.19 L1387.0,472.19 L1388.0,472.18 L1389.0,472.17 L1390.0,472.17 L1391.0,472.16 L1392.0,472.16 L1393.0,472.15 L1394.0,472.15 L1395.0,472.14 L1396.0,472.14 L1397.0,472.13 L1398.0,472.13 L1399.0,472.12 L1400.0,472.12 L1401.0,472.11 L1402.0,472.11 L1403.0,472.10 L1404.0,472.10 L1405.0,472.10 L1406.0,472.09 L1407.0,472.09 L1408.0,472.08 L1409.0,472.08 L1410.0,472.08 L1411.0,472.07 L1412.0,472.07 L1413.0,472.06 L1414.0,472.06 L1415.0,472.06 L1416.0,472.05 L1417.0,472.05 L1418.0,472.05 L1419.0,472.04 L1420.0,472.04 L1421.0,472.04 L1422.0,472.04 L1423.0,472.03 L1424.0,472.03 L1425.0,472.03 L1426.0,472.03 L1427.0,472.02 L1428.0,472.02 L1429.0,472.02 L1430.0,472.02 L1431.0,472.02 L1432.0,472.01 L1433.0,472.01 L1434.0,472.01 L1435.0,472.01 L1436.0,472.01 L1437.0,472.01 L1438.0,472.01 L1439.0,472.00 L1440.0,472.00 L1441.0,472.00 L1442.0,472.00 L1443.0,472.00 L1444.0,472.00 L1445.0,472.00 L1446.0,472.00 L1447.0,472.00 L1448.0,472.00" stroke="#1ab4b8" stroke-width="3.2" fill="none" stroke-linejoin="round"/><g stroke="#bdbdbd" stroke-width="2.5" fill="none"><path d="M788,49 H1448 V234 H788 M798,49 V234"/><path d="M788,49 H798"/><path d="M788,139 H798"/><path d="M788,234 H798"/><path d="M788,260.5 H1448 V445.7 H788 M798,260.5 V445.7"/><path d="M788,260.5 H798"/><path d="M788,297.5 H798"/><path d="M788,334.5 H798"/><path d="M788,371.5 H798"/><path d="M788,408.5 H798"/><path d="M788,445.7 H798"/><path d="M788,471.8 H1448 V660.5 H788 M798,471.8 V660.5"/><path d="M788,471.8 H798"/><path d="M788,509.5 H798"/><path d="M788,547.2 H798"/><path d="M788,584.9 H798"/><path d="M788,622.6 H798"/><path d="M788,660.5 H798"/><path d="M798,660.5 V670"/><path d="M863,660.5 V670"/><path d="M928,660.5 V670"/><path d="M993,660.5 V670"/><path d="M1058,660.5 V670"/><path d="M1123,660.5 V670"/><path d="M1188,660.5 V670"/><path d="M1253,660.5 V670"/><path d="M1318,660.5 V670"/><path d="M1383,660.5 V670"/><path d="M1448,660.5 V670"/></g><g font-family="Liberation Sans" font-size="17" fill="#d4d4d4" stroke="#d4d4d4" stroke-width="0.35"><text x="787" y="55" text-anchor="end">3.3V</text><text x="787" y="145" text-anchor="end">1.7V</text><text x="787" y="240" text-anchor="end">0.0V</text><text x="787" y="266.5" text-anchor="end">20V</text><text x="787" y="303.5" text-anchor="end">16V</text><text x="787" y="340.5" text-anchor="end">12V</text><text x="787" y="377.5" text-anchor="end">8V</text><text x="787" y="414.5" text-anchor="end">4V</text><text x="787" y="451.7" text-anchor="end">0V</text><text x="787" y="477.8" text-anchor="end">0V</text><text x="787" y="515.5" text-anchor="end">-2V</text><text x="787" y="553.2" text-anchor="end">-4V</text><text x="787" y="590.9" text-anchor="end">-6V</text><text x="787" y="628.6" text-anchor="end">-8V</text><text x="787" y="666.5" text-anchor="end">-10V</text><text x="798.5" y="688.5" text-anchor="middle" letter-spacing="1">0ms</text><text x="863.5" y="688.5" text-anchor="middle" letter-spacing="1">1ms</text><text x="928.5" y="688.5" text-anchor="middle" letter-spacing="1">2ms</text><text x="993.5" y="688.5" text-anchor="middle" letter-spacing="1">3ms</text><text x="1058.5" y="688.5" text-anchor="middle" letter-spacing="1">4ms</text><text x="1123.5" y="688.5" text-anchor="middle" letter-spacing="1">5ms</text><text x="1188.5" y="688.5" text-anchor="middle" letter-spacing="1">6ms</text><text x="1253.5" y="688.5" text-anchor="middle" letter-spacing="1">7ms</text><text x="1318.5" y="688.5" text-anchor="middle" letter-spacing="1">8ms</text><text x="1383.5" y="688.5" text-anchor="middle" letter-spacing="1">9ms</text><text x="1448.5" y="688.5" text-anchor="middle" letter-spacing="1">10ms</text></g><text x="1122" y="42" text-anchor="middle" font-family="Liberation Sans" font-weight="bold" font-size="18" fill="#10c010">V(pwr_en)</text><text x="1124" y="253.5" text-anchor="middle" font-family="Liberation Sans" font-weight="bold" font-size="18" fill="#1414d0">V(vout)</text><path d="M1085.7,446 V471" stroke="#a0a0a0" stroke-width="1.5"/><text x="1121" y="466" text-anchor="middle" font-family="Liberation Sans" font-weight="bold" font-size="18" fill="#20a8a0">V(g,Vin)</text>
<rect x="1193" y="543.5" width="227" height="153" fill="#ebebeb" stroke="#c4c4c4" stroke-width="1"/>
<rect x="1194" y="544" width="225" height="22" fill="#fafafa"/>
<path d="M1200,550 h5 v4 h3 v6 h-4 v-4 h-4 z" fill="#7a4a4a"/>
<text x="1215.5" y="559" font-family="Liberation Sans" font-size="10" font-weight="bold" fill="#c4c4c4" textLength="110" lengthAdjust="spacingAndGlyphs">PMOS#BHW# WHA.raw</text>
<path d="M1405,551 l8,8 M1413,551 l-8,8" stroke="#a0a0a0" stroke-width="1.3"/>
<g font-family="Liberation Sans" font-size="10" font-weight="bold" fill="#585858" lengthAdjust="spacingAndGlyphs">
<text x="1199" y="576" textLength="30">Cursor 1</text>
<text x="1281" y="584" font-size="9" textLength="32" fill="#777">Sig insta</text>
<text x="1197" y="601" font-size="9" textLength="17" fill="#666">Horz:</text>
<text x="1316" y="601" font-size="9" textLength="15" fill="#666">Vert:</text>
<text x="1199" y="618" textLength="32">Cursor 2</text>
<text x="1199" y="660" textLength="84" fill="#5a5a5a">Diff (Cursor2 - Cursor1)</text>
</g>
<rect x="1219" y="589" width="82" height="16" fill="#fdfdfd"/>
<path d="M1219.5,605 V589.5 H1301" stroke="#a0a0a0" stroke-width="1.4" fill="none"/>
<text x="1232" y="601" font-family="Liberation Sans" font-size="10" font-weight="bold" fill="#3c3c3c" textLength="58" lengthAdjust="spacingAndGlyphs">3.3943524ms</text>
<rect x="1332" y="586.5" width="77" height="20.5" fill="#fdfdfd" stroke="#d63232" stroke-width="2.8"/>
<text x="1403" y="601" text-anchor="end" font-family="Liberation Sans" font-size="10" font-weight="bold" fill="#3c3c3c" textLength="56" lengthAdjust="spacingAndGlyphs">0.677334mV</text>
<g font-family="Liberation Sans" font-size="8" fill="#b0b0b0" lengthAdjust="spacingAndGlyphs">
<text x="1198" y="643" textLength="17">Horz:</text><text x="1250" y="636" textLength="55">(Cursor2 - Cursor1)</text><text x="1251" y="646" textLength="20">N/A</text>
<text x="1314" y="636" textLength="102">(Cursor2 - Cursor1) Period</text><text x="1315" y="646" textLength="20">Period</text><text x="1369" y="646" textLength="22">N/A</text>
<text x="1198" y="673" textLength="17">Horz:</text><text x="1198" y="690" textLength="17">Freq:</text>
<text x="1315" y="673" textLength="16">Vert:</text><text x="1312" y="690" textLength="19">Slope:</text>
<text x="1247" y="673" textLength="30">-- N/A --</text><text x="1247" y="690" textLength="30">-- N/A --</text>
<text x="1361" y="673" textLength="30">-- N/A --</text><text x="1361" y="690" textLength="30">-- N/A --</text>
</g>
<path d="M1219.5,646 V633.5 H1245" stroke="#c4c4c4" stroke-width="1.2" fill="none"/>
<g stroke="#a4a4a4" stroke-width="1.6" fill="none">
<path d="M1219.5,676 V663.5 H1302"/><path d="M1219.5,693 V680.5 H1302"/>
<path d="M1334.5,676 V663.5 H1417"/><path d="M1334.5,693 V680.5 H1417"/>
</g>
<g stroke="#d82222" stroke-width="2.6" fill="none"><circle cx="1025.5" cy="418" r="9"/><circle cx="1026.4" cy="486.8" r="9"/><path d="M1026,427 V478"/><path d="M1034,489 L1319,578.5"/></g><polygon points="1021.5,466 1030.5,466 1026,474" fill="#e02020"/><polygon points="1327,581.5 1316,584 1319,574" fill="#e21e1e"/></g></svg></div></body></html>
